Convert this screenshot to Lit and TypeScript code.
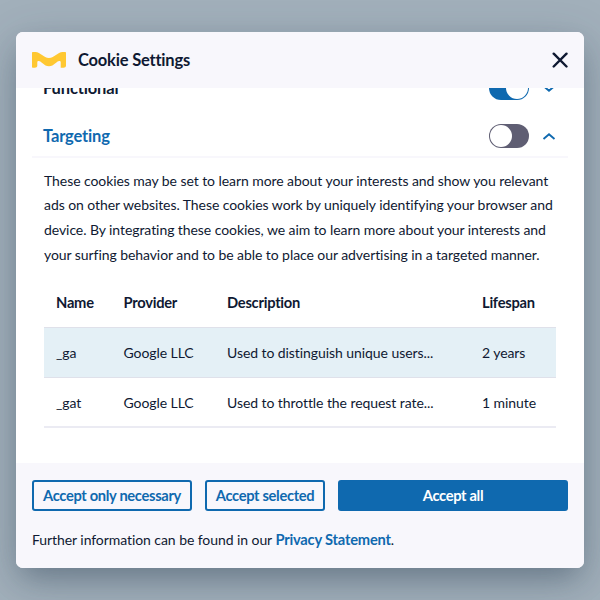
import { LitElement, html, css, svg } from "lit";
import { customElement, property, state } from "lit/decorators.js";
import { classMap } from "lit/directives/class-map.js";

interface CookieEntry {
  name: string;
  provider: string;
  description: string;
  lifespan: string;
}

const COOKIES: CookieEntry[] = [
  { name: "_ga", provider: "Google LLC", description: "Used to distinguish unique users...", lifespan: "2 years" },
  { name: "_gat", provider: "Google LLC", description: "Used to throttle the request rate...", lifespan: "1 minute" },
];

@customElement("toggle-switch")
export class ToggleSwitch extends LitElement {
  @property({ type: Boolean, reflect: true }) on = false;

  static styles = css`
    :host { display: block; }
    .track {
      display: flex;
      box-sizing: border-box;
      width: 40.5px;
      height: 24px;
      padding: 1px;
      border: 0;
      border-radius: 12px;
      background: #5f5e73;
    }
    .track.on { background: #0f69af; justify-content: flex-end; }
    .knob { width: 22px; height: 22px; border-radius: 50%; background: #fff; }
  `;

  render() {
    return html`<button
      class=${classMap({ track: true, on: this.on })}
      role="switch"
      aria-checked=${this.on}
      @click=${() => (this.on = !this.on)}
    ><span class="knob"></span></button>`;
  }
}

@customElement("category-row")
export class CategoryRow extends LitElement {
  @property() label = "";
  @property({ type: Boolean }) on = false;
  @property({ type: Boolean }) open = false;

  static styles = css`
    :host { display: block; flex: none; }
    .row {
      display: flex;
      align-items: center;
      box-sizing: border-box;
      height: 48px;
      padding: 0 12.5px 0 11px;
    }
    .label {
      flex: 1;
      font-size: 16.5px;
      line-height: 24px;
      font-weight: 700;
      letter-spacing: -0.15px;
      color: #0f1932;
    }
    .open .label { color: #0f69af; }
    .chevron { display: block; margin-left: 12.5px; }
    .row.open { height: 46px; padding-top: 4px; border-bottom: 2px solid #f8f7fc; }
  `;

  render() {
    const arrow = this.open
      ? svg`<path d="M1.500 6.900 7 2.300l5.500 4.600"/>`
      : svg`<path d="M1.500 2.100 7 6.700l5.500-4.600"/>`;
    return html`<div class=${classMap({ row: true, open: this.open })}>
      <span class="label">${this.label}</span>
      <toggle-switch ?on=${this.on}></toggle-switch>
      <svg class="chevron" width="14" height="9" viewBox="0 0 14 9" fill="none" stroke="#0f69af" stroke-width="1.900">${arrow}</svg>
    </div>`;
  }
}

@customElement("app-root")
export class AppRoot extends LitElement {
  @state() private cookies = COOKIES;

  static styles = css`
    :host {
      display: block;
      box-sizing: border-box;
      height: 100vh;
      padding: 32px 16px;
      overflow: hidden;
      background: #a2b0bb;
      font-family: Lato, "Liberation Sans", sans-serif;
      font-size: 14px;
      letter-spacing: -0.07px;
      color: #0f1932;
    }
    .dialog {
      display: flex;
      flex-direction: column;
      height: 536px;
      border-radius: 7px;
      overflow: hidden;
      background: #fff;
      box-shadow: 0 12px 48px rgba(45, 65, 85, 0.26), 0 14px 28px -6px rgba(45, 65, 85, 0.35);
    }
    header {
      display: flex;
      align-items: center;
      flex: none;
      height: 56px;
      padding: 0 16px;
      background: #f8f7fc;
    }
    .logo { display: block; margin-right: 12px; }
    h1 { flex: 1; margin: 0; font-size: 16.5px; line-height: 24px; font-weight: 700; letter-spacing: -0.2px; }
    .close { display: block; padding: 0; border: 0; background: none; }
    .close svg { display: block; }
    main {
      display: flex;
      flex-direction: column;
      justify-content: flex-end;
      flex: 1;
      min-height: 0;
      padding: 0 16px;
      overflow: hidden;
    }
    .detail { flex: none; box-sizing: border-box; height: 305px; padding: 10.75px 12px 0; }
    p { margin: 0; }
    .intro { height: 109.25px; line-height: 24.64px; white-space: nowrap; }
    table { width: 512px; border-collapse: separate; border-spacing: 0; table-layout: fixed; }
    .c1 { width: 67.5px; }
    .c2 { width: 103.5px; }
    .c3 { width: 255px; }
    th, td {
      box-sizing: border-box;
      height: 50px;
      padding: 0 0 0 12px;
      text-align: left;
      white-space: nowrap;
      line-height: 20px;
      border-bottom: 1px solid #dfe1ea;
    }
    th { padding-bottom: 2px; font-size: 14.7px; letter-spacing: -0.25px; }
    tbody tr:nth-child(odd) td { background: #e4f0f6; }
    tbody tr:last-child td { padding-top: 2px; border-bottom: 2px solid #ebebf3; }
    footer { flex: none; box-sizing: border-box; height: 105px; padding: 17px 16px 0; background: #f8f7fc; }
    .actions { display: flex; gap: 13px; }
    .btn {
      box-sizing: border-box;
      height: 31px;
      padding: 0 0 2px;
      border: 2px solid #0f69af;
      border-radius: 3px;
      background: none;
      color: #0f69af;
      font: 700 14.7px/20px Lato, "Liberation Sans", sans-serif;
      letter-spacing: -0.33px;
      white-space: nowrap;
    }
    .necessary { width: 160px; }
    .selected { width: 120px; }
    .all { flex: 1; background: #0f69af; color: #fff; }
    .more { margin-top: 17px; line-height: 22px; }
    .more a {
      color: #0f69af;
      font-size: 14.7px;
      font-weight: 700;
      letter-spacing: -0.2px;
      text-decoration: none;
    }
  `;

  render() {
    return html`
      <div class="dialog" role="dialog">
        <header>
          <svg class="logo" width="34" height="16" viewBox="0 0 34 16">
            <path fill="#ffc832" d="M0 1C0 .3.400 0 1 0h2.400C8.500 0 11.500 6 17 6S25.500 0 30.600 0H33c.600 0 1 .300 1 1v12.800c0 1.200-1.100 2-2.500 2h-2.800V10.300c0-.800-.500-1.300-1.400-1.300-2.800 0-5.100 5.200-10.300 5.200S9.500 9 6.700 9c-.900 0-1.400.500-1.400 1.300v3.500c0 1.200-1.100 2-2.500 2H1c-.600 0-1-.300-1-1z"/>
          </svg>
          <h1>Cookie Settings</h1>
          <button class="close" aria-label="Close">
            <svg width="16" height="16" viewBox="0 0 16 16" fill="none" stroke="#0f1932" stroke-width="2.400" stroke-linecap="round">
              <path d="M1.700 1.700l12.800 12.800M14.500 1.700l-12.800 12.800"/>
            </svg>
          </button>
        </header>
        <main>
          <category-row label="Functional" on></category-row>
          <category-row label="Targeting" open></category-row>
          <section class="detail">
            <p class="intro">
              These cookies may be set to learn more about your interests and show you relevant<br />
              ads on other websites. These cookies work by uniquely identifying your browser and<br />
              device. By integrating these cookies, we aim to learn more about your interests and<br />
              your surfing behavior and to be able to place our advertising in a targeted manner.
            </p>
            <table>
              <colgroup><col class="c1" /><col class="c2" /><col class="c3" /><col /></colgroup>
              <thead>
                <tr><th>Name</th><th>Provider</th><th>Description</th><th>Lifespan</th></tr>
              </thead>
              <tbody>
                ${this.cookies.map(
                  (c) => html`<tr><td>${c.name}</td><td>${c.provider}</td><td>${c.description}</td><td>${c.lifespan}</td></tr>`,
                )}
              </tbody>
            </table>
          </section>
        </main>
        <footer>
          <div class="actions">
            <button class="btn necessary">Accept only necessary</button>
            <button class="btn selected">Accept selected</button>
            <button class="btn all">Accept all</button>
          </div>
          <p class="more">Further information can be found in our <a>Privacy Statement</a>.</p>
        </footer>
      </div>
    `;
  }
}
